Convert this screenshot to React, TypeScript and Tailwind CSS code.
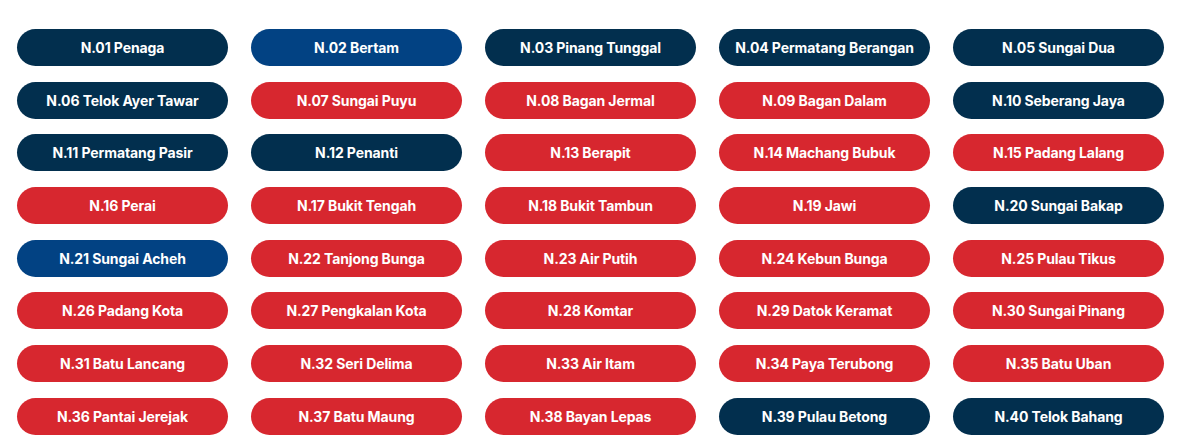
const seats: [string, 'navy' | 'blue' | 'red'][] = [
  ['N.01 Penaga', 'navy'],
  ['N.02 Bertam', 'blue'],
  ['N.03 Pinang Tunggal', 'navy'],
  ['N.04 Permatang Berangan', 'navy'],
  ['N.05 Sungai Dua', 'navy'],
  ['N.06 Telok Ayer Tawar', 'navy'],
  ['N.07 Sungai Puyu', 'red'],
  ['N.08 Bagan Jermal', 'red'],
  ['N.09 Bagan Dalam', 'red'],
  ['N.10 Seberang Jaya', 'navy'],
  ['N.11 Permatang Pasir', 'navy'],
  ['N.12 Penanti', 'navy'],
  ['N.13 Berapit', 'red'],
  ['N.14 Machang Bubuk', 'red'],
  ['N.15 Padang Lalang', 'red'],
  ['N.16 Perai', 'red'],
  ['N.17 Bukit Tengah', 'red'],
  ['N.18 Bukit Tambun', 'red'],
  ['N.19 Jawi', 'red'],
  ['N.20 Sungai Bakap', 'navy'],
  ['N.21 Sungai Acheh', 'blue'],
  ['N.22 Tanjong Bunga', 'red'],
  ['N.23 Air Putih', 'red'],
  ['N.24 Kebun Bunga', 'red'],
  ['N.25 Pulau Tikus', 'red'],
  ['N.26 Padang Kota', 'red'],
  ['N.27 Pengkalan Kota', 'red'],
  ['N.28 Komtar', 'red'],
  ['N.29 Datok Keramat', 'red'],
  ['N.30 Sungai Pinang', 'red'],
  ['N.31 Batu Lancang', 'red'],
  ['N.32 Seri Delima', 'red'],
  ['N.33 Air Itam', 'red'],
  ['N.34 Paya Terubong', 'red'],
  ['N.35 Batu Uban', 'red'],
  ['N.36 Pantai Jerejak', 'red'],
  ['N.37 Batu Maung', 'red'],
  ['N.38 Bayan Lepas', 'red'],
  ['N.39 Pulau Betong', 'navy'],
  ['N.40 Telok Bahang', 'navy'],
]

const tone = {
  navy: 'bg-[#022f4e]',
  blue: 'bg-[#024283]',
  red: 'bg-[#d7272f]',
}

export default function App() {
  return (
    <div className="h-[446px] w-[1200px] bg-white pl-[17px] pt-[29px]" style={{ fontFamily: 'Inter, "Open Sans", sans-serif' }}>
      <div className="grid w-[1147px] grid-cols-5 gap-x-[23px] gap-y-[15.7px]">
        {seats.map(([name, party]) => (
          <a
            key={name}
            href="#"
            className={`${tone[party]} flex h-[37px] items-center justify-center rounded-full text-[14px] font-bold tracking-[-0.1px] text-white`}
          >
            {name}
          </a>
        ))}
      </div>
    </div>
  )
}
